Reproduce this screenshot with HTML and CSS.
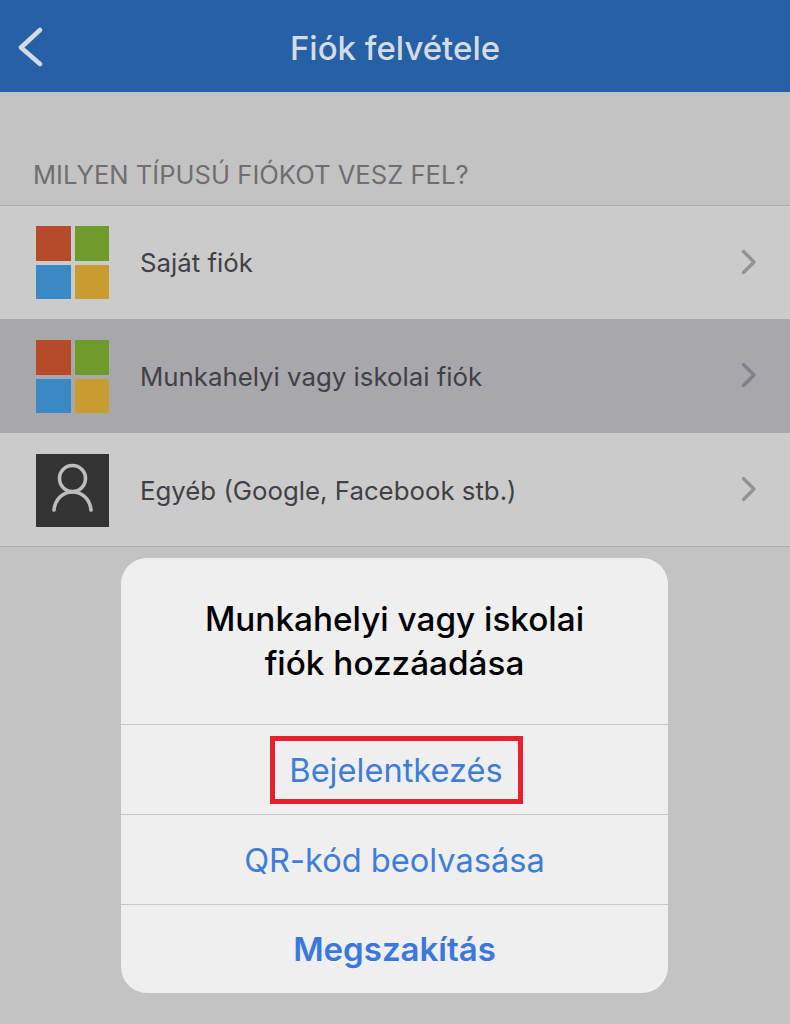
FILE: index.html
```html
<!DOCTYPE html>
<html lang="hu">
<head>
  <meta charset="UTF-8" />
  <meta name="viewport" content="width=device-width, initial-scale=1.0"/>
  <title>Fiók felvétele</title>
  <link rel="stylesheet" href="styles.css">
</head>
<body>

  <header class="topbar">
    <svg class="back" width="30" height="40" viewBox="0 0 30 40">
      <path d="M25 3 L6 20.5 L25 37" fill="none" stroke="#d5dbe4" stroke-width="4.5" stroke-linecap="round" stroke-linejoin="round"/>
    </svg>
    <span class="topbar-title">Fiók felvétele</span>
  </header>

  <main>
    <div class="section-label">MILYEN TÍPUSÚ FIÓKOT VESZ FEL?</div>

    <div class="list">
      <div class="row">
        <div class="ms-logo"><i class="red"></i><i class="green"></i><i class="blue"></i><i class="yellow"></i></div>
        <span class="row-text">Saját fiók</span>
        <svg class="chevron" width="16" height="26" viewBox="0 0 16 26"><path d="M2.5 2.5 L13 13 L2.5 23.5" fill="none" stroke="#939393" stroke-width="3.4" stroke-linecap="round" stroke-linejoin="round"/></svg>
      </div>
      <div class="row row-active">
        <div class="ms-logo"><i class="red"></i><i class="green"></i><i class="blue"></i><i class="yellow"></i></div>
        <span class="row-text">Munkahelyi vagy iskolai fiók</span>
        <svg class="chevron" width="16" height="26" viewBox="0 0 16 26"><path d="M2.5 2.5 L13 13 L2.5 23.5" fill="none" stroke="#828187" stroke-width="3.4" stroke-linecap="round" stroke-linejoin="round"/></svg>
      </div>
      <div class="row row-last">
        <div class="user-icon">
          <svg width="73" height="73" viewBox="0 0 73 73">
            <circle cx="36.5" cy="24.5" r="13" fill="none" stroke="#bdbdbd" stroke-width="3.6"/>
            <path d="M18 56 C19 46 26 38 36.5 38 C47 38 54 46 55 56" fill="none" stroke="#bdbdbd" stroke-width="3.6" stroke-linecap="round"/>
          </svg>
        </div>
        <span class="row-text">Egyéb (Google, Facebook stb.)</span>
        <svg class="chevron" width="16" height="26" viewBox="0 0 16 26"><path d="M2.5 2.5 L13 13 L2.5 23.5" fill="none" stroke="#939393" stroke-width="3.4" stroke-linecap="round" stroke-linejoin="round"/></svg>
      </div>
    </div>
  </main>

  <div class="dialog">
    <div class="dialog-title">Munkahelyi vagy iskolai<br>fiók hozzáadása</div>
    <div class="dialog-btn"><span class="marked">Bejelentkezés</span></div>
    <div class="dialog-btn">QR-kód beolvasása</div>
    <div class="dialog-btn dialog-cancel">Megszakítás</div>
  </div>

</body>
</html>
```

FILE: styles.css
```css
* {
  box-sizing: border-box;
}

body {
  font-family: 'Inter', 'Liberation Sans', sans-serif;
  background: #c3c3c3;
  margin: 0;
  padding: 0;
  width: 790px;
  height: 1024px;
  overflow: hidden;
  position: relative;
}

.topbar {
  background: #2660a6;
  height: 92px;
  padding-top: 3px;
  position: relative;
  display: flex;
  align-items: center;
  justify-content: center;
}

.back {
  position: absolute;
  left: 15px;
  top: 27px;
}

.topbar-title {
  color: #d5dbe4;
  font-size: 33px;
  font-weight: 500;
}

.section-label {
  color: #6f6f6f;
  font-size: 25.6px;
  padding: 68px 0 0 33px;
  height: 113px;
  line-height: 29px;
}

.list {
  border-top: 1px solid #aeaeae;
  border-bottom: 1px solid #aeaeae;
}

.row {
  height: 114px;
  background: #cbcbcb;
  display: flex;
  align-items: center;
  padding: 0 33px 0 36px;
}

.row:first-child {
  height: 113px;
}

.row-last {
  height: 113px;
  padding-top: 1px;
}

.row-active {
  background: #a8a7ac;
}

.chevron {
  margin-top: -2px;
}

.ms-logo {
  width: 73px;
  height: 73px;
  display: grid;
  grid-template-columns: 35px 34px;
  grid-template-rows: 35px 34px;
  gap: 4px;
}

.ms-logo .red { background: #b54b28; }
.ms-logo .green { background: #6f9a2c; }
.ms-logo .blue { background: #3a88c4; }
.ms-logo .yellow { background: #c99c30; }

.user-icon {
  width: 73px;
  height: 73px;
  background: #333333;
}

.user-icon svg {
  display: block;
}

.row-text {
  flex: 1;
  margin-left: 31px;
  color: #414145;
  font-size: 25.8px;
}

.dialog {
  position: absolute;
  left: 121px;
  top: 558px;
  width: 547px;
  height: 435px;
  background: #efefef;
  border-radius: 26px;
  display: flex;
  flex-direction: column;
}

.dialog-title {
  height: 166px;
  padding-top: 39px;
  color: #000;
  font-size: 33.3px;
  font-weight: 500;
  line-height: 44px;
  text-align: center;
}

.dialog-btn {
  height: 90px;
  border-top: 1px solid #c9c9c9;
  display: flex;
  align-items: center;
  justify-content: center;
  color: #3f7ddc;
  font-size: 32.6px;
}

.dialog-cancel {
  height: 89px;
  font-size: 33px;
  font-weight: 600;
  color: #3a78e0;
}

.marked {
  border: 5px solid #e8202c;
  width: 253px;
  height: 68px;
  margin-left: 3px;
  display: flex;
  align-items: center;
  justify-content: center;
}
```
